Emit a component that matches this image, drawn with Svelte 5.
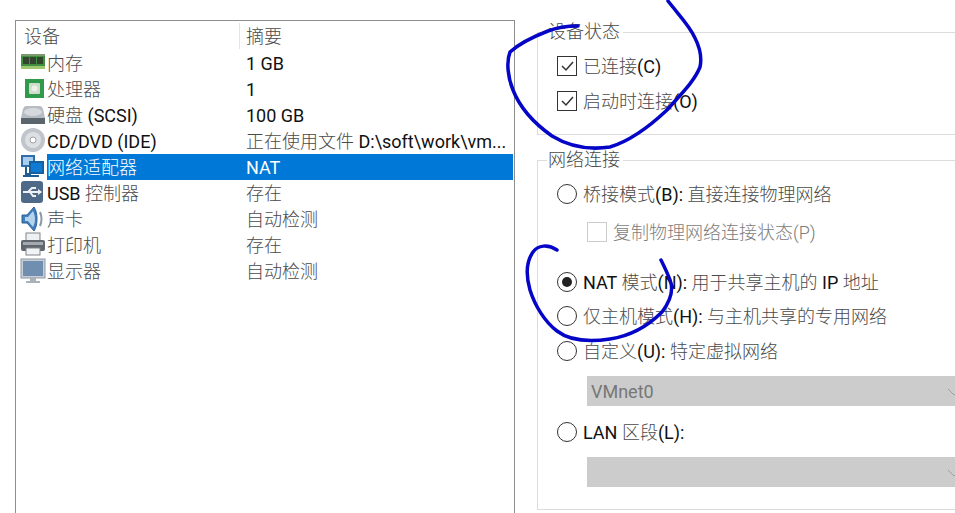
<script>
  const rows = [
    { icon: 'ram', name: '内存', value: '1 GB' },
    { icon: 'cpu', name: '处理器', value: '1' },
    { icon: 'hdd', name: '硬盘 (SCSI)', value: '100 GB' },
    { icon: 'cd', name: 'CD/DVD (IDE)', value: '正在使用文件 D:\\soft\\work\\vm...' },
    { icon: 'net', name: '网络适配器', value: 'NAT', selected: true },
    { icon: 'usb', name: 'USB 控制器', value: '存在' },
    { icon: 'sound', name: '声卡', value: '自动检测' },
    { icon: 'printer', name: '打印机', value: '存在' },
    { icon: 'monitor', name: '显示器', value: '自动检测' }
  ];
  const parts = (t) => t.match(/[\u4e00-\u9fff]+|[^\u4e00-\u9fff]+/g);
  const isCjk = (s) => /[\u4e00-\u9fff]/.test(s);
</script>

{#snippet txt(t)}
  {#each parts(t) as p}<span class:cjk={isCjk(p)}>{p}</span>{/each}
{/snippet}

{#snippet checked()}
  <svg class="cb" viewBox="0 0 20 20" width="20" height="20"><rect x=".5" y=".5" width="19" height="19" fill="#fff" stroke="#333" /><path d="M5 10l4 4 7-8" stroke="#333" stroke-width="1.5" fill="none" /></svg>
{/snippet}

{#snippet chevron()}
  <svg class="chev" viewBox="0 0 14 8" width="14" height="8"><path d="M1 1l6 6 6-6" stroke="#a0a0a0" fill="none" /></svg>
{/snippet}

<div class="page">
  <section class="list">
    <div class="head">
      <div class="h1">{@render txt('设备')}</div>
      <div class="h2">{@render txt('摘要')}</div>
    </div>
    {#each rows as r}
      <div class="row">
        <svg class="ic" viewBox="0 0 26 26" width="26" height="26">
          {#if r.icon === 'ram'}
            <rect x="1" y="4" width="24" height="15" fill="#3f8f3f" />
            <rect x="1" y="4" width="24" height="2" fill="#7d9c6e" />
            <rect x="3" y="7" width="6" height="7" fill="#34452f" />
            <rect x="10" y="7" width="6" height="7" fill="#34452f" />
            <rect x="17" y="7" width="6" height="7" fill="#34452f" />
            <rect x="1" y="16" width="24" height="3" fill="#9cc76f" />
          {:else if r.icon === 'cpu'}
            <rect x="5" y="3" width="19" height="19" fill="#2f9a4a" />
            <rect x="9" y="7" width="11" height="11" rx="1" fill="#cfdccc" />
            <circle cx="14.5" cy="12.5" r="3" fill="#eef1ea" />
          {:else if r.icon === 'hdd'}
            <path d="M6 4h14q2 0 3 3l2 9H1l2-9q1-3 3-3z" fill="#b6bcc2" />
            <ellipse cx="13" cy="10" rx="9" ry="4" fill="#d5d9dd" />
            <rect x="1" y="16" width="24" height="6" fill="#5b656e" />
          {:else if r.icon === 'cd'}
            <circle cx="13" cy="12" r="12" fill="#bfc5ca" />
            <circle cx="13" cy="12" r="8" fill="#dde0e3" />
            <circle cx="13" cy="12" r="3" fill="#fff" stroke="#9aa0a6" />
          {:else if r.icon === 'net'}
            <rect x="1" y="1" width="14" height="12" fill="#2f6ea8" />
            <rect x="3" y="3" width="10" height="8" fill="#a9cdec" />
            <rect x="9" y="7" width="15" height="13" fill="#16609f" />
            <rect x="11" y="9" width="11" height="9" fill="#0f7ad4" />
            <path d="M6 13v7h5M3 22h16" stroke="#1d5f95" stroke-width="2" fill="none" />
          {:else if r.icon === 'usb'}
            <rect x="1" y="1" width="22" height="22" rx="3" fill="#4f6a88" />
            <path d="M3 12h18M8 12l4-4h4M10 12l3 4h3" stroke="#eef2f6" stroke-width="2" fill="none" />
            <path d="M18 9l4 3-4 3z" fill="#eef2f6" />
          {:else if r.icon === 'sound'}
            <path d="M2 9h5L14 1c2 3 3 7 3 12s-1 9-3 12l-7-8H2z" fill="#3f7fbf" stroke="#2f5f92" />
            <path d="M5 11h3l5-6c1 2 2 5 2 8s-1 6-2 8l-5-6H5z" fill="#b6d3ee" />
            <path d="M20 6q3 7 0 14" stroke="#8d99a5" stroke-width="2" fill="none" />
          {:else if r.icon === 'printer'}
            <rect x="6" y="1" width="14" height="8" fill="#eef0f2" stroke="#7f858b" />
            <rect x="1" y="8" width="24" height="11" rx="2" fill="#5f666d" />
            <rect x="3" y="10" width="20" height="3" fill="#a3a9af" />
            <rect x="6" y="16" width="14" height="7" fill="#f1f3f5" stroke="#7f858b" />
          {:else}
            <rect x="1" y="1" width="24" height="19" fill="#c7ced5" stroke="#8f99a3" />
            <rect x="3" y="3" width="20" height="15" fill="#6f8eb0" />
            <path d="M10 20h6v3H10zM6 23h14v2H6z" fill="#a9b2bb" />
          {/if}
        </svg>
        <div class="name" class:sel={r.selected}>{@render txt(r.name)}</div>
        <div class="value" class:sel={r.selected}>{@render txt(r.value)}</div>
      </div>
    {/each}
  </section>

  <div class="side">
    <fieldset class="box status">
      <legend>{@render txt('设备状态')}</legend>
      <div class="opt check">
        {@render checked()}
        <span>{@render txt('已连接(C)')}</span>
      </div>
      <div class="opt check">
        {@render checked()}
        <span>{@render txt('启动时连接(O)')}</span>
      </div>
    </fieldset>

    <fieldset class="box network">
      <legend>{@render txt('网络连接')}</legend>
      <div class="opt"><i class="radio"></i><span>{@render txt('桥接模式(B): 直接连接物理网络')}</span></div>
      <div class="opt sub">
        <svg class="cb" viewBox="0 0 20 20" width="20" height="20"><rect x=".5" y=".5" width="19" height="19" fill="#fff" stroke="#ccc" /></svg>
        <span class="dim">复制物理网络连接状态(P)</span>
      </div>
      <div class="opt nat"><i class="radio on"></i><span>{@render txt('NAT 模式(N): 用于共享主机的 IP 地址')}</span></div>
      <div class="opt host"><i class="radio"></i><span>{@render txt('仅主机模式(H): 与主机共享的专用网络')}</span></div>
      <div class="opt custom"><i class="radio"></i><span>{@render txt('自定义(U): 特定虚拟网络')}</span></div>
      <div class="select">VMnet0{@render chevron()}</div>
      <div class="opt lan"><i class="radio"></i><span>{@render txt('LAN 区段(L):')}</span></div>
      <div class="select">{@render chevron()}</div>
    </fieldset>
  </div>

  <svg class="ink" viewBox="0 0 955 513" width="955" height="513">
    <path d="M668 1C678 14 690 26 695 38C700 48 702 58 700 67C694 82 680 95 667 110C650 126 630 141 610 147C590 150 570 147 552 136C535 124 520 108 513 90C508 78 506 62 510 52C520 43 535 36 548 31C558 27 568 26 578 26" />
    <path d="M557 250C548 244 538 245 533 252C526 262 526 276 530 290C535 306 545 322 557 331C570 341 590 342 610 339C630 336 648 326 662 312C671 300 674 290 670 280C667 272 664 266 661 260" />
  </svg>
</div>

<style>
  :global(body) {
    margin: 0;
    background: #fff;
  }
  .page {
    position: relative;
    width: 955px;
    height: 513px;
    overflow: hidden;
    display: flex;
    align-items: flex-start;
    font: 18px/26px Roboto, "Noto Sans CJK SC", sans-serif;
    color: #111;
  }
  .cjk {
    color: #4a4a4a;
    font-weight: 300;
  }
  .list {
    box-sizing: border-box;
    flex: none;
    width: 500px;
    height: 493px;
    margin: 20px 0 0 15px;
    border: 1px solid #8e8e8e;
    border-bottom: 0;
  }
  .head {
    display: flex;
    height: 29px;
    padding-top: 2px;
    box-sizing: border-box;
    line-height: 28px;
  }
  .h1 {
    width: 224px;
    height: 26px;
    padding-left: 8px;
    box-sizing: border-box;
    border-right: 1px solid #e4e4e4;
  }
  .h2 {
    padding-left: 6px;
  }
  .row {
    display: flex;
    height: 26px;
    margin-right: 1px;
    align-items: center;
  }
  .ic {
    flex: none;
    margin-left: 4px;
    margin-right: 1px;
  }
  .name {
    width: 198px;
    height: 26px;
    line-height: 28px;
    box-sizing: border-box;
    flex: none;
    white-space: nowrap;
  }
  .value {
    flex: 1;
    height: 26px;
    line-height: 28px;
    padding-left: 1px;
    white-space: nowrap;
    overflow: hidden;
  }
  .sel,
  .sel .cjk {
    background: #0078d7;
    color: #fff;
  }
  .side {
    flex: none;
    width: 440px;
    margin-left: 22px;
  }
  .box {
    position: relative;
    margin: 0;
    padding: 0;
    border: 0;
    border-top: 1px solid #dcdcdc;
    border-left: 1px solid #dcdcdc;
    border-bottom: 1px solid #dcdcdc;
    box-sizing: border-box;
  }
  legend {
    margin-left: -10px;
    padding: 0 3px 0 1px;
    line-height: 24px;
  }
  .status {
    height: 115px;
    margin-top: 20px;
    padding: 9px 0 0 19px;
  }
  .network {
    height: 362px;
    margin-top: 13px;
    padding: 9px 0 0 19px;
  }
  .opt {
    display: flex;
    align-items: center;
    height: 26px;
    gap: 6px;
  }
  .opt > span {
    line-height: 28px;
    height: 26px;
  }
  .check {
    margin-bottom: 9px;
  }
  .sub {
    margin: 12px 0 0 30px;
  }
  .nat {
    margin-top: 24px;
  }
  .host {
    margin-top: 8px;
  }
  .custom {
    margin-top: 9px;
  }
  .lan {
    margin-top: 13px;
  }
  .dim {
    color: #7c7c7c;
    font-weight: 300;
  }
  .cb {
    flex: none;
  }
  .radio {
    flex: none;
    box-sizing: border-box;
    width: 20px;
    height: 20px;
    border: 1px solid #333;
    border-radius: 50%;
    background: #fff;
    display: flex;
    align-items: center;
    justify-content: center;
  }
  .radio.on::before {
    content: "";
    width: 10px;
    height: 10px;
    border-radius: 50%;
    background: #222;
  }
  .select {
    position: relative;
    box-sizing: border-box;
    width: 400px;
    height: 30px;
    margin: 12px 0 0 30px;
    padding-left: 4px;
    line-height: 31px;
    background: #cccccc;
    color: #777;
  }
  .chev {
    position: absolute;
    left: 360px;
    top: 12px;
  }
  .ink {
    position: absolute;
    left: 0;
    top: 0;
    pointer-events: none;
  }
  .ink path {
    fill: none;
    stroke: #0505c8;
    stroke-width: 3.5;
    stroke-linecap: round;
    stroke-linejoin: round;
  }
</style>
